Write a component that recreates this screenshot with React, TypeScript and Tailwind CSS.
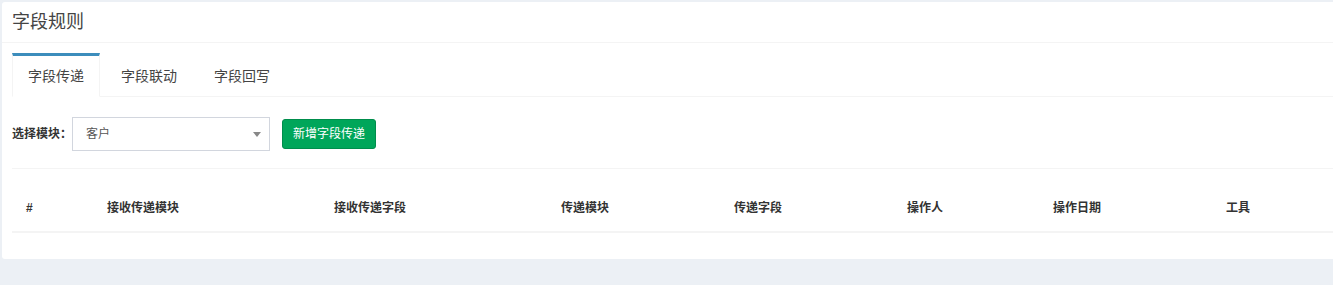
const font = "font-['Liberation_Sans','Noto_Sans_CJK_SC',sans-serif]";

const tabs = [
  { label: "字段传递", active: true },
  { label: "字段联动", active: false },
  { label: "字段回写", active: false },
];

const columns = [
  { label: "#", width: "w-[81px]" },
  { label: "接收传递模块", width: "w-[227px]" },
  { label: "接收传递字段", width: "w-[227px]" },
  { label: "传递模块", width: "w-[173px]" },
  { label: "传递字段", width: "w-[173px]" },
  { label: "操作人", width: "w-[146px]" },
  { label: "操作日期", width: "w-[173px]" },
  { label: "工具", width: "flex-1" },
];

export default function App() {
  return (
    <div className={`${font} h-[285px] w-full overflow-hidden bg-[#ecf0f5] pl-[2px] pt-[2px]`}>
      <div className="rounded-l-[3px] bg-white pb-[26px]">
        {/* header */}
        <div className="flex h-[41px] items-center border-b border-[#f4f4f4] pl-[10px]">
          <h3 className="text-[18px] leading-none text-[#444]">字段规则</h3>
        </div>

        {/* tabs */}
        <div className="mt-[10px] pl-[10px]">
          <ul className="flex border-b border-[#f4f4f4]">
            {tabs.map((tab) => (
              <li
                key={tab.label}
                className={
                  tab.active
                    ? "-mb-px mr-[5px] border-x border-t-[3px] border-b border-x-[#f4f4f4] border-t-[#3c8dbc] border-b-white bg-white px-[15px] py-[10px] text-[14px] leading-5 text-[#444]"
                    : "-mb-px mr-[5px] border-x border-t-[3px] border-b border-transparent px-[15px] py-[10px] text-[14px] leading-5 text-[#444]"
                }
              >
                {tab.label}
              </li>
            ))}
          </ul>
        </div>

        {/* content */}
        <div className="pl-[10px] pt-[20px]">
          <div className="flex items-center">
            <label className="w-[60px] text-[12px] font-bold text-[#333]">选择模块：</label>
            <div className="flex h-[34px] w-[198px] items-center justify-between border border-[#d2d6de] pl-[13px] pr-[8px]">
              <span className="text-[12px] text-[#555]">客户</span>
              <span className="h-0 w-0 border-x-[4px] border-t-[5px] border-x-transparent border-t-[#888]" />
            </div>
            <button className="ml-[12px] h-[30px] rounded-[3px] border border-[#008d4c] bg-[#00a65a] px-[10px] text-[12px] text-white">
              新增字段传递
            </button>
          </div>

          <div className="mt-[17px] border-t border-[#f4f4f4]" />

          <div className="flex border-b-2 border-[#f4f4f4]">
            {columns.map((col) => (
              <div
                key={col.label}
                className={`${col.width} pb-[13px] pl-[14px] pt-[29px] text-[12px] font-bold leading-5 text-[#333]`}
              >
                {col.label}
              </div>
            ))}
          </div>
        </div>
      </div>
    </div>
  );
}
